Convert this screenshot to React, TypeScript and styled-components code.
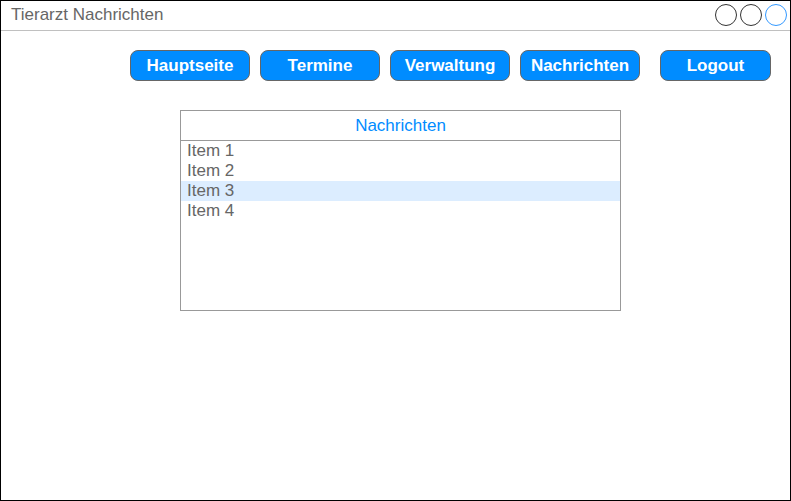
import React from 'react';
import styled, { createGlobalStyle } from 'styled-components';

const GlobalStyle = createGlobalStyle`
  html, body {
    margin: 0;
    padding: 0;
    background: #ffffff;
  }
  body {
    font-family: "Liberation Sans", Arial, sans-serif;
  }
`;

const Window = styled.div`
  box-sizing: border-box;
  width: 791px;
  height: 501px;
  border: 1px solid #000000;
  background: #ffffff;
  display: flex;
  flex-direction: column;
`;

const TitleBar = styled.div`
  box-sizing: border-box;
  height: 30px;
  flex-shrink: 0;
  border-bottom: 1px solid #c0c0c0;
  display: flex;
  align-items: center;
  justify-content: space-between;
  padding: 0 3px 1px 10px;
`;

const Title = styled.span`
  font-size: 17px;
  color: #666666;
`;

const Controls = styled.div`
  display: flex;
  gap: 3px;
`;

const Circle = styled.span<{ $active?: boolean }>`
  box-sizing: border-box;
  width: 22px;
  height: 22px;
  border-radius: 50%;
  border: 1px solid ${(p) => (p.$active ? '#3399ff' : '#333333')};
`;

const Nav = styled.nav`
  display: flex;
  padding: 19px 0 0 129px;
  gap: 10px;
`;

const NavButton = styled.button<{ $width?: number; $push?: number }>`
  box-sizing: border-box;
  width: ${(p) => p.$width || 121}px;
  height: 31px;
  margin-left: ${(p) => p.$push || 0}px;
  border: 1px solid #666666;
  border-radius: 8px;
  background: #008cff;
  color: #ffffff;
  font-family: "Liberation Sans", Arial, sans-serif;
  font-weight: bold;
  font-size: 17px;
  padding: 0;
  cursor: pointer;
`;

const ListBox = styled.div`
  box-sizing: border-box;
  width: 441px;
  height: 201px;
  margin: 29px 0 0 179px;
  border: 1px solid #999999;
  display: flex;
  flex-direction: column;
`;

const ListHeader = styled.div`
  box-sizing: border-box;
  height: 30px;
  border-bottom: 1px solid #999999;
  display: flex;
  align-items: center;
  justify-content: center;
  font-size: 17px;
  color: #008cff;
`;

const ListItem = styled.div<{ $selected?: boolean }>`
  height: 20px;
  line-height: 20px;
  padding-left: 6px;
  font-size: 17px;
  color: #666666;
  background: ${(p) => (p.$selected ? '#dcedff' : 'transparent')};
`;

const items = ['Item 1', 'Item 2', 'Item 3', 'Item 4'];

const App = () => {
  return (
    <>
      <GlobalStyle />
      <Window>
        <TitleBar>
          <Title>Tierarzt Nachrichten</Title>
          <Controls>
            <Circle />
            <Circle />
            <Circle $active />
          </Controls>
        </TitleBar>
        <Nav>
          <NavButton $width={120}>Hauptseite</NavButton>
          <NavButton $width={120}>Termine</NavButton>
          <NavButton $width={120}>Verwaltung</NavButton>
          <NavButton $width={120}>Nachrichten</NavButton>
          <NavButton $width={111} $push={10}>
            Logout
          </NavButton>
        </Nav>
        <ListBox>
          <ListHeader>Nachrichten</ListHeader>
          {items.map((item, i) => (
            <ListItem key={item} $selected={i === 2}>
              {item}
            </ListItem>
          ))}
        </ListBox>
      </Window>
    </>
  );
};

export default App;
